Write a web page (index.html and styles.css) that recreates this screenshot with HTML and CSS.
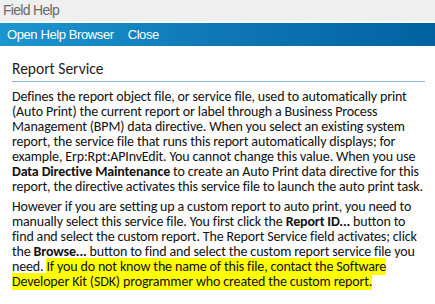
FILE: index.html
```html
<!DOCTYPE html>
<html lang="en">
<head>
  <meta charset="UTF-8">
  <meta name="viewport" content="width=device-width, initial-scale=1.0">
  <title>Field Help</title>
  <link rel="stylesheet" href="styles.css">
</head>
<body>
  <div class="window">
    <!-- title bar -->
    <div class="titlebar">Field Help</div>

    <!-- menu bar -->
    <div class="menubar">
      <span class="menu-item">Open Help Browser</span>
      <span class="menu-item">Close</span>
    </div>

    <!-- help content -->
    <div class="content">
      <h1 class="topic">Report Service</h1>
      <p>Defines the report object file, or service file, used to automatically print (Auto Print) the current report or label through a Business Process Management (BPM) data directive. When you select an existing system report, the service file that runs this report automatically displays; for example, Erp:Rpt:APInvEdit. You cannot change this value. When you use <b>Data Directive Maintenance</b> to create an Auto Print data directive for this report, the directive activates this service file to launch the auto print task.</p>
      <p>However if you are setting up a custom report to auto print, you need to manually select this service file. You first click the <b>Report ID...</b> button to find and select the custom report. The Report Service field activates; click the <b>Browse...</b> button to find and select the custom report service file you need. <span class="highlight">If you do not know the name of this file, contact the Software Developer Kit (SDK) programmer who created the custom report.</span></p>
    </div>
  </div>
</body>
</html>
```

FILE: styles.css
```css
html, body {
  margin: 0;
  padding: 0;
  background: #fff;
}
.window {
  display: flex;
  flex-direction: column;
  min-height: 100vh;
}
.titlebar {
  height: 21px;
  line-height: 20px;
  padding-left: 3px;
  background: #efefef;
  color: #6a6a6a;
  font-family: "Liberation Sans", Arial, sans-serif;
  font-size: 14px;
  letter-spacing: -0.7px;
  border-bottom: 2px solid #fff;
}
.menubar {
  display: flex;
  gap: 14px;
  height: 23px;
  align-items: center;
  padding-left: 7px;
  background: linear-gradient(to right, #1c96d0, #0e78b5 50%, #0262a0);
  color: #fff;
  font-family: "Liberation Sans", Arial, sans-serif;
  font-size: 13px;
  letter-spacing: -0.4px;
}
.menu-item {
  cursor: pointer;
}
.content {
  padding: 14px 10px 0 12px;
  font-family: Carlito, Calibri, Lato, sans-serif;
  font-size: 14px;
  line-height: 15px;
  letter-spacing: -0.15px;
  color: #111;
}
/* topic heading with thin blue rule */
.topic {
  margin: 0 0 7px;
  padding-bottom: 3px;
  font-size: 15.5px;
  font-weight: normal;
  line-height: 18px;
  letter-spacing: 0;
  color: #1e1e1e;
  border-bottom: 1px solid #8db3e2;
}
.content p {
  margin: 0 0 5px;
}
.highlight {
  background: #ffff00;
}
```
